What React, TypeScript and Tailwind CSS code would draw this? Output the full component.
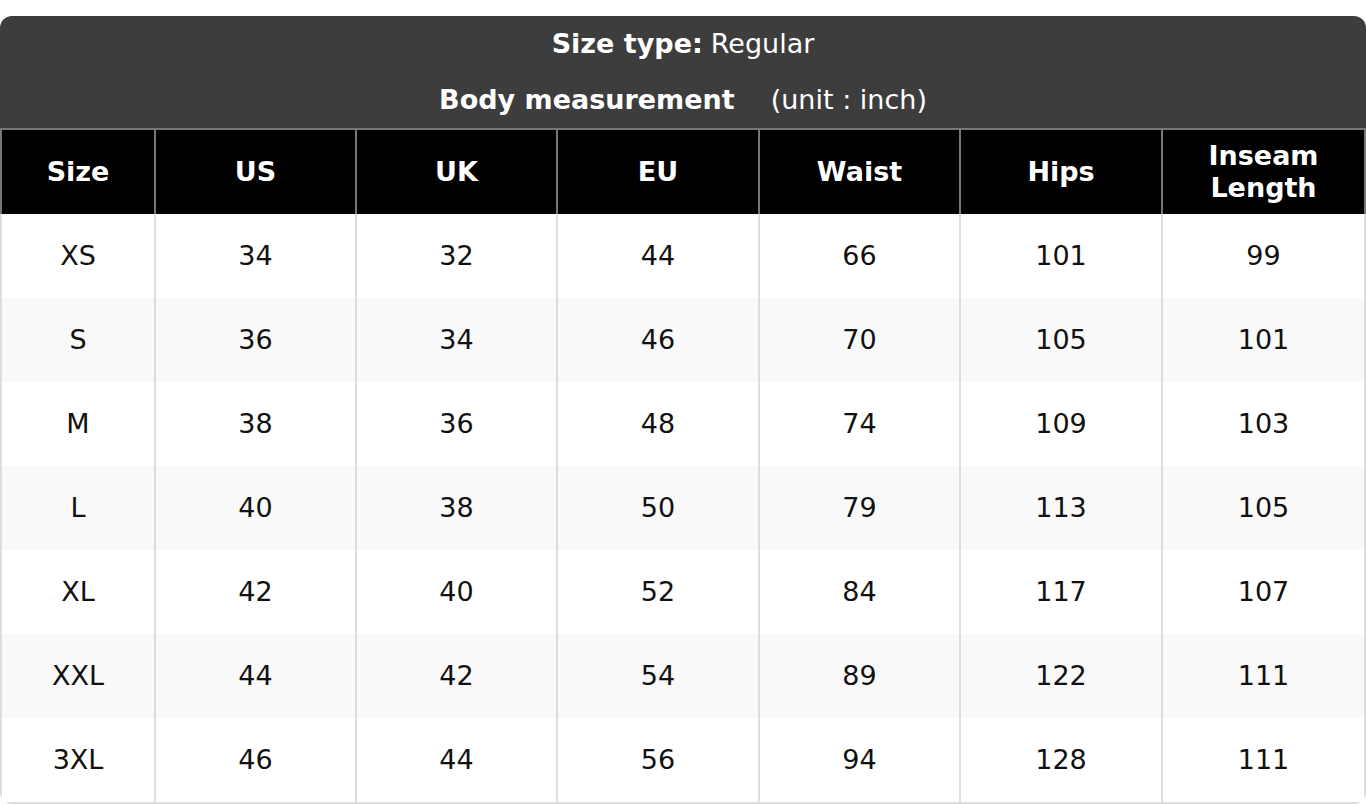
import React from "react";

const headers = ["Size", "US", "UK", "EU", "Waist", "Hips", "Inseam Length"];
const rows: string[][] = [
  ["XS", "34", "32", "44", "66", "101", "99"],
  ["S", "36", "34", "46", "70", "105", "101"],
  ["M", "38", "36", "48", "74", "109", "103"],
  ["L", "40", "38", "50", "79", "113", "105"],
  ["XL", "42", "40", "52", "84", "117", "107"],
  ["XXL", "44", "42", "54", "89", "122", "111"],
  ["3XL", "46", "44", "56", "94", "128", "111"],
];

export default function App() {
  return (
    <div className="bg-white pt-4 min-h-screen" style={{ fontFamily: '"DejaVu Sans", sans-serif' }}>
      <div className="rounded-xl overflow-hidden bg-white">
        <div className="bg-[#3d3d3d] h-[112px] flex flex-col text-white text-[27px]">
          <div className="h-[56px] flex items-center justify-center">
            <span className="font-bold">Size type:</span>
            <span className="ml-[8px]">Regular</span>
          </div>
          <div className="h-[56px] flex items-center justify-center">
            <span className="font-bold">Body measurement</span>
            <span className="ml-[36px]">(unit : inch)</span>
          </div>
        </div>
        <div className="grid grid-cols-[154px_201px_201px_202px_201px_202px_1fr]">
          {headers.map((h, i) => (
            <div
              key={h}
              className={
                "bg-black text-white font-bold text-[27px] leading-[32px] h-[86px] border-t-2 border-l-2 border-[#777] flex items-center justify-center text-center px-2 " +
                (i === headers.length - 1 ? "border-r-2" : "")
              }
            >
              {h === "Inseam Length" ? (
                <span>
                  Inseam
                  <br />
                  Length
                </span>
              ) : (
                h
              )}
            </div>
          ))}
          {rows.map((r, ri) =>
            r.map((c, ci) => (
              <div
                key={ri + "-" + ci}
                className={
                  "h-[84px] border-l-2 border-[#ddd] flex items-center justify-center text-[27px] text-[#111] " +
                  (ri % 2 === 1 ? "bg-[#f9f9f9] " : "bg-white ") +
                  (ci === r.length - 1 ? "border-r-2 " : "")
                }
              >
                {c}
              </div>
            ))
          )}
        </div>
        <div className="h-[2px] bg-[#ddd]" />
      </div>
    </div>
  );
}
